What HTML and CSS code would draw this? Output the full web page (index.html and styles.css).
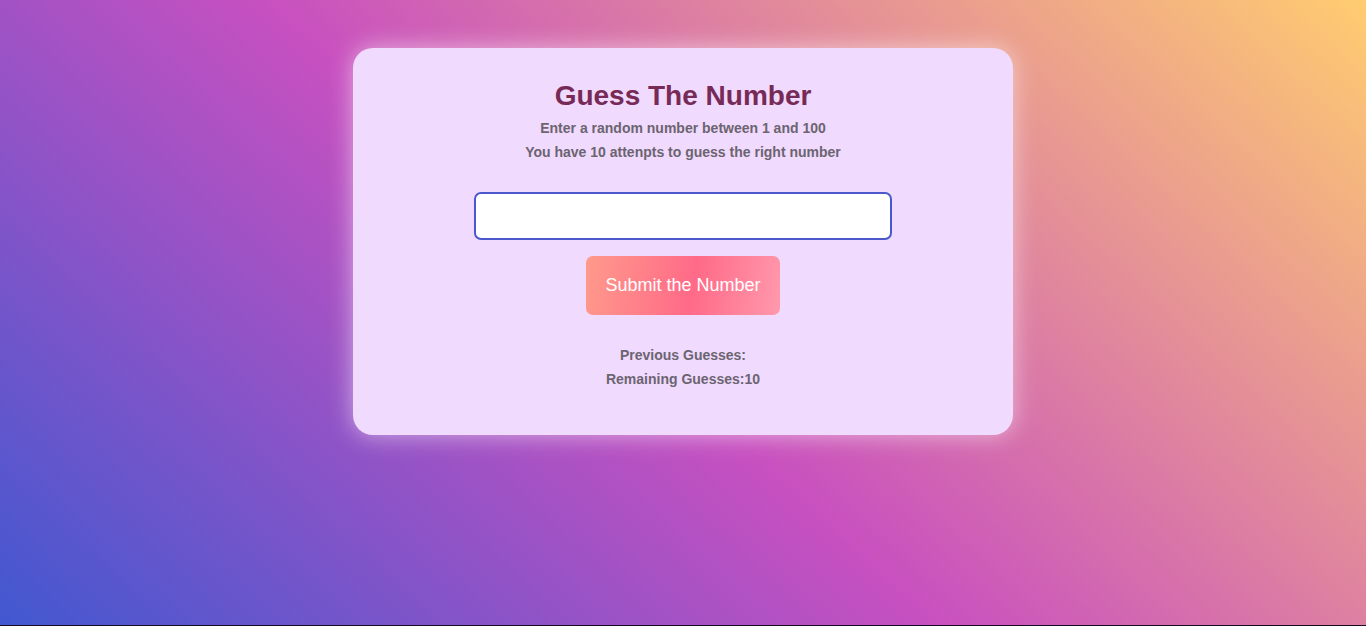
FILE: index.html
```html
<!DOCTYPE html>
<html lang="en">
<head>
<meta charset="utf-8">
<title>Guess The Number</title>
<link rel="stylesheet" href="styles.css">
</head>
<body>
<main class="page">
  <section class="card">
    <h1 class="title">Guess The Number</h1>
    <p class="info">Enter a random number between 1 and 100</p>
    <p class="info">You have 10 attenpts to guess the right number</p>
    <form class="form">
      <input class="guess-input" type="text" aria-label="Your guess">
      <button class="submit" type="button">Submit the Number</button>
    </form>
    <div class="results">
      <p class="info">Previous Guesses:</p>
      <p class="info">Remaining Guesses:10</p>
    </div>
  </section>
</main>
</body>
</html>
```
FILE: styles.css
```css
html {
  background: #150a1f;
}
body {
  margin: 0;
  height: 625px;
  overflow: hidden;
  font-family: "Liberation Sans", Arial, sans-serif;
  background: linear-gradient(43deg, #4158D0 0%, #C850C0 46%, #FFCC70 100%);
}
.page {
  display: flex;
  justify-content: center;
  padding-top: 48px;
}
.card {
  width: 660px;
  box-sizing: border-box;
  padding: 32px 0 44px;
  background: #f0dafe;
  border-radius: 20px;
  box-shadow: 0 0 24px rgba(255, 255, 255, 0.55);
  display: flex;
  flex-direction: column;
  align-items: center;
}
.title {
  margin: 0 0 4px;
  font-size: 28px;
  line-height: 32px;
  font-weight: 700;
  color: #772a56;
}
.info {
  margin: 0;
  font-size: 14px;
  line-height: 24px;
  font-weight: 700;
  color: #6c6470;
}
.form {
  margin-top: 28px;
  display: flex;
  flex-direction: column;
  align-items: center;
  gap: 16px;
}
.guess-input {
  width: 418px;
  height: 48px;
  box-sizing: border-box;
  border: 2px solid #4a58cc;
  border-radius: 7px;
  background: #ffffff;
  outline: none;
  padding: 0 12px;
  font-size: 18px;
  font-family: inherit;
}
.submit {
  width: 194px;
  height: 59px;
  border: none;
  border-radius: 7px;
  background: linear-gradient(100deg, #FF9A8B 0%, #FF6A88 55%, #FF99AC 100%);
  color: #ffffff;
  font-family: inherit;
  font-size: 18px;
  padding: 0;
}
.results {
  margin-top: 28px;
  display: flex;
  flex-direction: column;
  align-items: center;
}
```
